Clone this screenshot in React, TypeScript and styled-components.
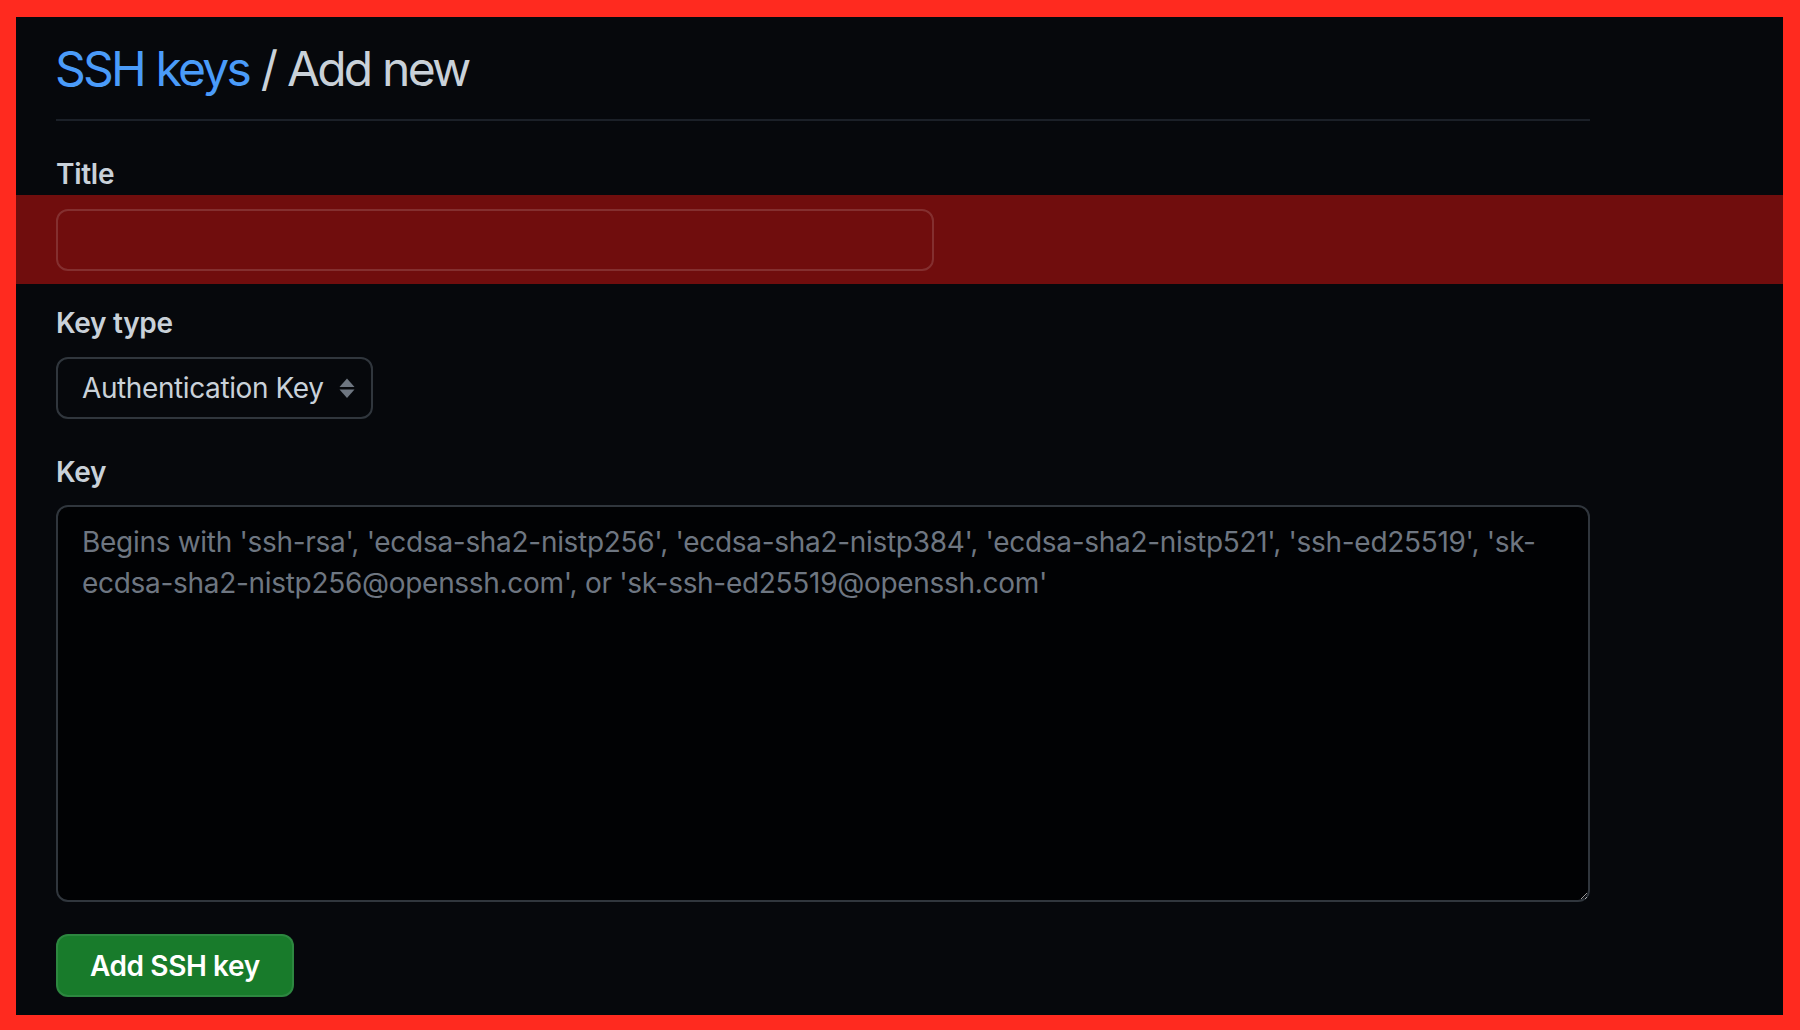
import React from "react";
import styled, { createGlobalStyle } from "styled-components";

const GlobalStyle = createGlobalStyle`
  html, body {
    margin: 0;
    padding: 0;
    background: #ff2a1f;
  }
  *, *::before, *::after { box-sizing: border-box; }
  body {
    font-family: Inter, "Liberation Sans", sans-serif;
    color-scheme: dark;
  }
`;

const Frame = styled.div`
  height: 1030px;
  padding: 17px 17px 15px 16px;
  background: #ff2a1f;
  display: flex;
`;

const Panel = styled.main`
  flex: 1;
  background: #06080c;
  padding-top: 22px;
  display: flex;
  flex-direction: column;
`;

const Section = styled.div`
  width: 1574px;
  padding-left: 40px;
`;

const Subhead = styled.div`
  padding-bottom: 20px;
  border-bottom: 2px solid #1b2028;
`;

const Heading = styled.h1`
  margin: 0 0 0 -1px;
  font-size: 48px;
  line-height: 60px;
  font-weight: 400;
  letter-spacing: -2.8px;
  word-spacing: 1px;
  color: #c9d1d9;
  white-space: nowrap;
`;

const Crumb = styled.a`
  color: #4a9bf9;
  text-decoration: none;
`;

const FormGroup = styled.div<{ $gap: number }>`
  margin-top: ${(p) => p.$gap}px;
`;

const Label = styled.label`
  display: block;
  font-size: 28px;
  line-height: 42px;
  font-weight: 600;
  letter-spacing: -0.3px;
  color: #c9d1d9;
`;

const Band = styled.div`
  background: #700d0d;
  padding: 14px 0 13px 40px;
`;

const TextInput = styled.input`
  display: block;
  width: 878px;
  height: 62px;
  border: 2px solid rgba(255, 255, 255, 0.14);
  border-radius: 12px;
  background: transparent;
  padding: 0 24px;
  font: 28px Inter, "Liberation Sans", sans-serif;
  color: #c9d1d9;
  outline: none;
`;

const SelectBox = styled.div`
  margin-top: 13px;
  width: 317px;
  height: 62px;
  border: 2px solid #30363d;
  border-radius: 12px;
  padding: 0 16px 0 24px;
  display: flex;
  align-items: center;
  justify-content: space-between;
  font-size: 28px;
  letter-spacing: -0.4px;
  color: #c9d1d9;
  cursor: pointer;
`;

const SelectText = styled.span`
  white-space: nowrap;
`;

const KeyArea = styled.textarea`
  display: block;
  margin-top: 12px;
  width: 1534px;
  height: 397px;
  padding: 15px 24px 10px;
  border: 2px solid #30363d;
  border-radius: 12px;
  background: #010204;
  color: #c9d1d9;
  font: 28px/41px Inter, "Liberation Sans", sans-serif;
  letter-spacing: -0.3px;
  resize: vertical;
  outline: none;

  &::placeholder {
    color: #6e7681;
    opacity: 1;
  }
`;

const PrimaryButton = styled.button`
  margin-top: 32px;
  height: 63px;
  padding: 0 32px;
  background: #187b2b;
  border: 2px solid rgba(240, 246, 252, 0.1);
  border-radius: 12px;
  color: #ffffff;
  font: 600 28px Inter, "Liberation Sans", sans-serif;
  letter-spacing: -0.4px;
  cursor: pointer;
`;

const SortIcon = () => (
  <svg width="16" height="20" viewBox="0 0 16 20" aria-hidden="true">
    <path d="M0.5 9 L8 0.5 L15.5 9 Z" fill="#6e7681" />
    <path d="M0.5 11.5 L15.5 11.5 L8 20 Z" fill="#6e7681" />
  </svg>
);

const PLACEHOLDER =
  "Begins with 'ssh-rsa', 'ecdsa-sha2-nistp256', 'ecdsa-sha2-nistp384', 'ecdsa-sha2-nistp521', 'ssh-ed25519', 'sk-ecdsa-sha2-nistp256@openssh.com', or 'sk-ssh-ed25519@openssh.com'";

export default function App() {
  return (
    <>
      <GlobalStyle />
      <Frame>
        <Panel>
          <Section>
            <Subhead>
              <Heading>
                <Crumb href="#">SSH keys</Crumb> / Add new
              </Heading>
            </Subhead>
            <FormGroup $gap={32}>
              <Label htmlFor="title">Title</Label>
            </FormGroup>
          </Section>
          <Band>
            <TextInput id="title" type="text" />
          </Band>
          <Section>
            <FormGroup $gap={18}>
              <Label>Key type</Label>
              <SelectBox>
                <SelectText>Authentication Key</SelectText>
                <SortIcon />
              </SelectBox>
            </FormGroup>
            <FormGroup $gap={32}>
              <Label htmlFor="key">Key</Label>
              <KeyArea id="key" placeholder={PLACEHOLDER} />
            </FormGroup>
            <PrimaryButton type="button">Add SSH key</PrimaryButton>
          </Section>
        </Panel>
      </Frame>
    </>
  );
}
